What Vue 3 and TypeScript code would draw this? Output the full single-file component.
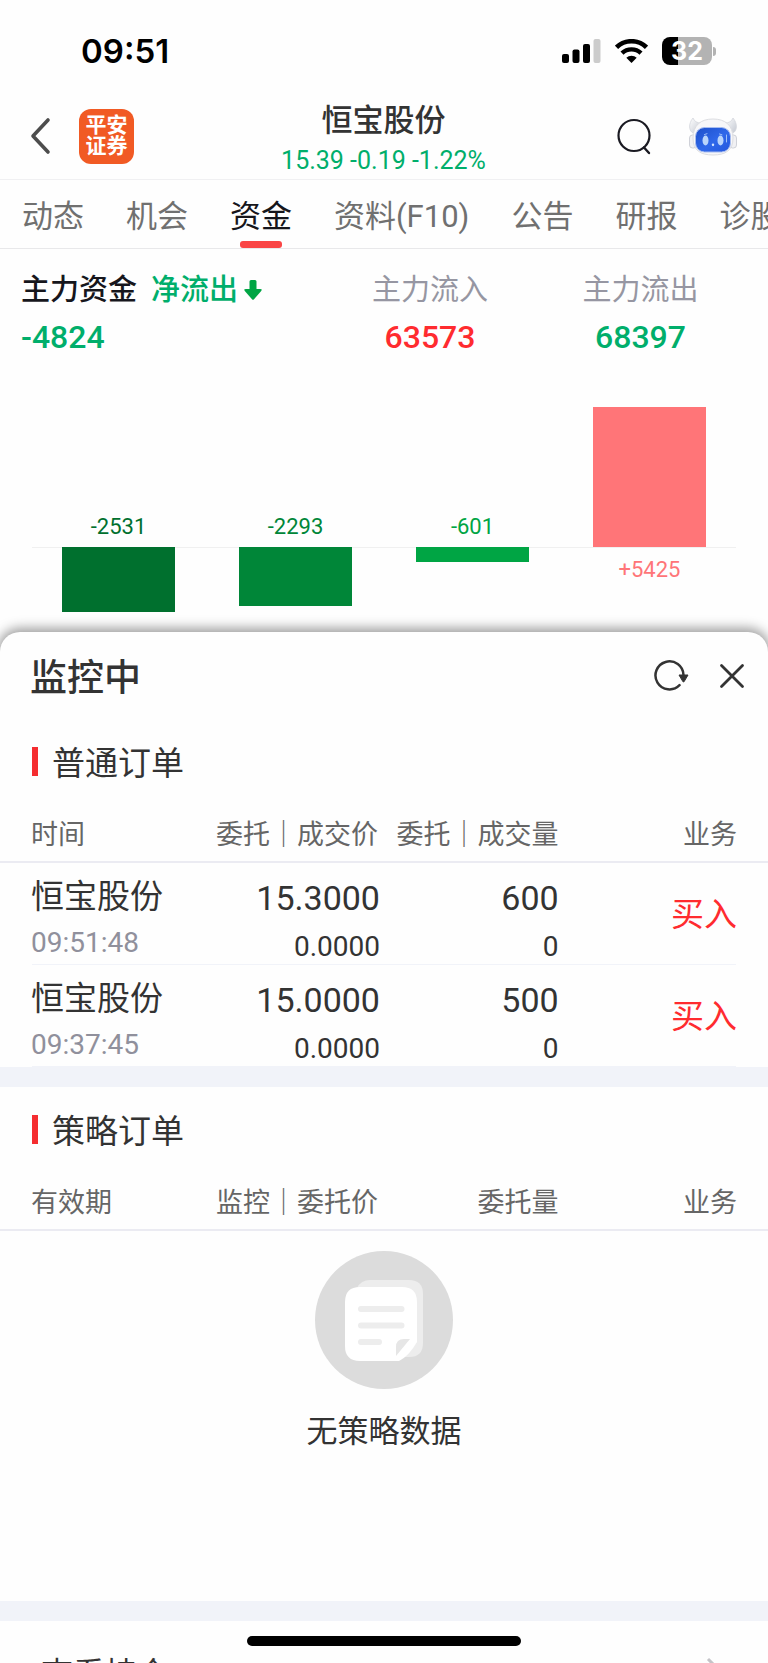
<script setup lang="ts">
interface FlowBar {
  value: number
  color: string
}
interface Order {
  name: string
  time: string
  price: string
  dealPrice: string
  volume: string
  dealVolume: string
  side: string
}

const tabs: string[] = ['动态', '机会', '资金', '资料(F10)', '公告', '研报', '诊股']
const activeTab = '资金'

const bars: FlowBar[] = [
  { value: -2531, color: '#00702e' },
  { value: -2293, color: '#008638' },
  { value: -601, color: '#00a544' },
  { value: 5425, color: '#ff7578' },
]
const peak = 5425
const barHeight = (v: number): string => `${Math.floor((Math.abs(v) / peak) * 140)}px`
const signed = (v: number): string => (v > 0 ? `+${v}` : `${v}`)

const orders: Order[] = [
  { name: '恒宝股份', time: '09:51:48', price: '15.3000', dealPrice: '0.0000', volume: '600', dealVolume: '0', side: '买入' },
  { name: '恒宝股份', time: '09:37:45', price: '15.0000', dealPrice: '0.0000', volume: '500', dealVolume: '0', side: '买入' },
]
</script>

<template>
  <div class="screen">
    <div class="status">
      <span class="clock">09:51</span>
      <div class="status-icons">
        <svg class="signal" width="39" height="24" viewBox="0 0 39 24" aria-hidden="true">
          <rect x="0" y="15" width="7" height="9" rx="2" />
          <rect x="10.5" y="10.5" width="7" height="13.5" rx="2" />
          <rect x="21" y="5" width="7" height="19" rx="2" />
          <rect x="31.500" y="0" width="7" height="24" rx="2" fill="#cccccc" />
        </svg>
        <svg class="wifi" width="33" height="24" viewBox="0 0 33 24" aria-hidden="true">
          <path d="M1.500 8.300a21.500 21.500 0 0 1 30 0" fill="none" stroke="#000" stroke-width="4.600" />
          <path d="M7 14.200a13.700 13.700 0 0 1 19 0" fill="none" stroke="#000" stroke-width="4.400" />
          <path d="M11.300 18.700a7.600 7.600 0 0 1 10.400 0L16.500 24z" />
        </svg>
        <div class="battery"><span class="battery-body">32</span><i class="battery-tip"></i></div>
      </div>
    </div>

    <header class="header">
      <div class="header-left">
        <button class="icon-btn" aria-label="返回">
          <svg width="22" height="38" viewBox="0 0 22 38"><path d="M19 3 4 19 19 35" fill="none" stroke="#4d4d4d" stroke-width="3.600" stroke-linecap="round" stroke-linejoin="round" /></svg>
        </button>
        <div class="logo"><span>平安</span><span>证券</span></div>
      </div>
      <div class="stock">
        <h1>恒宝股份</h1>
        <p>15.39 -0.19 -1.22%</p>
      </div>
      <div class="header-right">
        <button class="icon-btn" aria-label="搜索">
          <svg width="36" height="38" viewBox="0 0 36 38"><circle cx="18" cy="18.500" r="15.500" fill="none" stroke="#1a1a22" stroke-width="2.200" /><path d="M28 30.500l5 5.500" stroke="#1a1a22" stroke-width="2.400" stroke-linecap="round" /></svg>
        </button>
        <button class="icon-btn" aria-label="智能助手">
          <svg width="50" height="40" viewBox="0 0 50 40">
            <defs>
              <linearGradient id="visor" x1="0" y1="0" x2="1" y2="1"><stop offset="0" stop-color="#1d4fc9" /><stop offset=".55" stop-color="#2f68ea" /><stop offset="1" stop-color="#2457dd" /></linearGradient>
              <linearGradient id="horn" x1="0" y1="0" x2="1" y2="1"><stop offset="0" stop-color="#ffffff" /><stop offset="1" stop-color="#c3c8d2" /></linearGradient>
            </defs>
            <path d="M5 2C0 8 1 15 5 17L13 7Q7 7 5 2z" fill="url(#horn)" stroke="#d3d6dc" stroke-width=".8" />
            <path d="M45 2C50 8 49 15 45 17L37 7Q43 7 45 2z" fill="url(#horn)" stroke="#d3d6dc" stroke-width=".8" />
            <rect x="1.500" y="19" width="7" height="13" rx="3" fill="#f1f1f4" stroke="#cfd1d8" />
            <rect x="41.500" y="19" width="7" height="13" rx="3" fill="#f1f1f4" stroke="#cfd1d8" />
            <path d="M25 3C37 3 45 9 45 22C45 34 38 39 25 39S5 34 5 22C5 9 13 3 25 3z" fill="#f7f7f9" stroke="#dcdde1" />
            <rect x="7.500" y="11.500" width="35" height="24.500" rx="9" fill="url(#visor)" stroke="#a8bdf0" />
            <ellipse cx="17.500" cy="24.500" rx="3" ry="5" fill="#b9d4fb" />
            <ellipse cx="32.500" cy="24.500" rx="3" ry="5" fill="#b9d4fb" />
            <path d="M16.500 18.500l2.500-.8M31.500 18l2.500.8M38.500 19v7" stroke="#9fc0f8" stroke-linecap="round" />
            <ellipse cx="25" cy="28.800" rx="1.200" ry="1.400" fill="#d3e4ff" />
          </svg>
        </button>
      </div>
    </header>

    <nav class="tabs">
      <button v-for="t in tabs" :key="t" class="tab" :class="{ active: t === activeTab }">{{ t }}</button>
    </nav>

    <section class="summary">
      <div class="main-flow">
        <p class="label dark">主力资金 <span class="trend">净流出</span>
          <svg width="18" height="20" viewBox="0 0 18 20" aria-hidden="true"><path d="M7 0h4q1.500 0 1.500 1.500V9H16q3 0 1 2.200l-7 8q-1 1-2 0l-7-8Q-1 9 2 9h3.500V1.500Q5.500 0 7 0z" fill="#00a544" /></svg>
        </p>
        <p class="amount green">-4824</p>
      </div>
      <div class="flow">
        <p class="label">主力流入</p>
        <p class="amount red">63573</p>
      </div>
      <div class="flow">
        <p class="label">主力流出</p>
        <p class="amount green">68397</p>
      </div>
    </section>

    <section class="chart">
      <div v-for="b in bars" :key="b.value" class="chart-col">
        <div class="upper">
          <span v-if="b.value < 0" class="bar-label" :style="{ color: b.color }">{{ signed(b.value) }}</span>
          <div v-else class="bar" :style="{ height: barHeight(b.value), background: b.color }"></div>
        </div>
        <div class="lower">
          <div v-if="b.value < 0" class="bar" :style="{ height: barHeight(b.value), background: b.color }"></div>
          <span v-else class="bar-label" :style="{ color: b.color }">{{ signed(b.value) }}</span>
        </div>
      </div>
    </section>

    <main class="sheet">
      <div class="sheet-head">
        <h2>监控中</h2>
        <div class="sheet-actions">
          <button class="icon-btn" aria-label="刷新">
            <svg width="36" height="34" viewBox="0 0 36 34"><path d="M26.500 26.200A14 14 0 1 1 30.500 16" fill="none" stroke="#333" stroke-width="2.500" stroke-linecap="round" /><path d="M26 16h9l-4 6.800h-1z" fill="#333" stroke="#333" stroke-linejoin="round" /></svg>
          </button>
          <button class="icon-btn" aria-label="关闭">
            <svg width="26" height="26" viewBox="0 0 26 26"><path d="M2.500 2.500l21 21M23.500 2.500l-21 21" stroke="#333" stroke-width="2.800" stroke-linecap="round" /></svg>
          </button>
        </div>
      </div>

      <section>
        <h3 class="section-title">普通订单</h3>
        <table>
          <colgroup><col class="c1" /><col class="c2" /><col class="c3" /><col /></colgroup>
          <thead>
            <tr><th>时间</th><th>委托｜成交价</th><th>委托｜成交量</th><th>业务</th></tr>
          </thead>
          <tbody>
            <tr v-for="o in orders" :key="o.time">
              <td class="who"><div class="name">{{ o.name }}</div><div class="time">{{ o.time }}</div></td>
              <td class="figures"><div class="num">{{ o.price }}</div><div class="sub">{{ o.dealPrice }}</div></td>
              <td class="figures"><div class="num">{{ o.volume }}</div><div class="sub">{{ o.dealVolume }}</div></td>
              <td class="side">{{ o.side }}</td>
            </tr>
          </tbody>
        </table>
      </section>

      <section class="banded">
        <h3 class="section-title">策略订单</h3>
        <table>
          <colgroup><col class="c1" /><col class="c2" /><col class="c3" /><col /></colgroup>
          <thead>
            <tr><th>有效期</th><th>监控｜委托价</th><th>委托量</th><th>业务</th></tr>
          </thead>
        </table>
        <div class="empty">
          <svg width="138" height="138" viewBox="0 0 138 138" aria-hidden="true">
            <circle cx="69" cy="69" r="69" fill="#dcdcdc" />
            <path d="M42 37Q46 29 55 29H94Q108 29 108 43V92Q108 106 94 106H80z" fill="#ededed" />
            <path d="M45 36H87Q102 36 102 51V91Q94 105 84 110H45Q30 110 30 95V51Q30 36 45 36z" fill="#fff" />
            <path d="M81 105V96Q81 88 89 88H95z" fill="#e6e6e6" />
            <path d="M46 58H86.500M46 74.500H86.500M46 91H64" stroke="#ededed" stroke-width="6" stroke-linecap="round" />
          </svg>
          <p>无策略数据</p>
        </div>
      </section>

      <a class="holdings banded" href="#holdings">
        <span>查看持仓</span>
        <svg width="16" height="28" viewBox="0 0 16 28" aria-hidden="true"><path d="M2 2l12 12L2 26" fill="none" stroke="#c4c4c8" stroke-width="3" /></svg>
      </a>
    </main>

    <div class="home-bar"></div>
  </div>
</template>

<style>
body {
  margin: 0;
  background: #fff;
}
</style>

<style scoped>
.screen {
  position: relative;
  height: 100vh;
  overflow: hidden;
  display: flex;
  flex-direction: column;
  background: #fefefe;
  color: #333;
  font-family: Roboto, "Noto Sans CJK SC", sans-serif;
}
.screen > * {
  flex: none;
}
h1, h2, h3, p {
  margin: 0;
  font-weight: 400;
}
button {
  border: 0;
  padding: 0;
  background: none;
  font: inherit;
  color: inherit;
}
svg {
  display: block;
}
.status {
  display: flex;
  justify-content: space-between;
  align-items: center;
  height: 92px;
  box-sizing: border-box;
  padding: 10px 52px 0 81px;
}
.clock {
  font: 600 33px/40px Inter, sans-serif;
  color: #000;
}
.status-icons {
  display: flex;
  align-items: center;
  gap: 14px;
}
.battery {
  display: flex;
  align-items: center;
  gap: 1px;
}
.battery-body {
  width: 50px;
  height: 28px;
  border-radius: 8px;
  background: linear-gradient(90deg, #000 32%, #b3b3b3 32%);
  color: #fff;
  font: 700 25px/28px Inter, sans-serif;
  text-align: center;
}
.battery-tip {
  width: 3px;
  height: 9px;
  border-radius: 0 4px 4px 0;
  background: #b3b3b3;
}
.header {
  display: grid;
  grid-template-columns: 1fr auto 1fr;
  align-items: center;
  height: 88px;
  box-sizing: border-box;
  padding: 0 30px 0 29px;
  border-bottom: 1px solid #f0f0f2;
}
.header-left {
  display: flex;
  align-items: center;
  gap: 28px;
}
.header-right {
  display: flex;
  align-items: center;
  justify-content: flex-end;
  gap: 36px;
}
.logo {
  width: 55px;
  height: 55px;
  border-radius: 12px;
  background: #f15a24;
  color: #fff;
  font-size: 21px;
  font-weight: 700;
  line-height: 21px;
  display: flex;
  flex-direction: column;
  align-items: center;
  justify-content: center;
}
.stock {
  padding-top: 8px;
  text-align: center;
}
.stock h1 {
  font-size: 31px;
  line-height: 42px;
  font-weight: 500;
}
.stock p {
  font-size: 25px;
  line-height: 38px;
  color: #00ae6b;
}
.tabs {
  display: flex;
  gap: 42px;
  height: 69px;
  box-sizing: border-box;
  padding-left: 22px;
  border-bottom: 1px solid #e8e8ea;
  overflow: hidden;
}
.tab {
  flex: none;
  display: flex;
  flex-direction: column;
  align-items: center;
  padding-top: 13px;
  font-size: 31px;
  line-height: 48px;
  color: #707070;
}
.tab.active {
  color: #16161c;
}
.tab.active::after {
  content: "";
  width: 42px;
  height: 7px;
  border-radius: 3px;
  background: #fa4545;
}
.summary {
  display: grid;
  grid-template-columns: 305fr 208fr 213fr;
  padding: 17px 21px 0;
}
.label {
  font-size: 29px;
  line-height: 48px;
  color: #9696a2;
}
.label.dark {
  display: flex;
  align-items: center;
  color: #16161c;
  font-weight: 500;
}
.trend {
  margin: 0 6px 0 14px;
  color: #00ae6b;
}
.amount {
  font-size: 32px;
  line-height: 46px;
  font-weight: 500;
}
.flow {
  text-align: center;
}
.green {
  color: #00ae6b;
}
.red {
  color: #ff2b2f;
}
.chart {
  display: grid;
  grid-template-columns: repeat(4, 1fr);
  padding: 47px 30px 0;
  background: linear-gradient(#f0f0f0, #f0f0f0) center 187px / calc(100% - 64px) 1px no-repeat;
}
.chart-col {
  display: flex;
  flex-direction: column;
}
.upper {
  height: 140px;
  display: flex;
  flex-direction: column;
  justify-content: flex-end;
  align-items: center;
}
.lower {
  height: 85px;
  display: flex;
  flex-direction: column;
  align-items: center;
}
.bar {
  width: 64%;
}
.bar-label {
  margin: 9px 0 6px;
  font-size: 22px;
  line-height: 28px;
}
.sheet {
  border-radius: 20px 20px 0 0;
  background: #fefefe;
  box-shadow: 0 -2px 12px 2px rgba(0, 0, 0, 0.38);
}
.sheet-head {
  display: flex;
  justify-content: space-between;
  align-items: center;
  height: 87px;
  box-sizing: border-box;
  padding: 0 23px 0 30px;
}
.sheet-head h2 {
  padding-top: 6px;
  font-size: 37px;
  line-height: 48px;
  font-weight: 500;
}
.sheet-actions {
  display: flex;
  align-items: center;
  gap: 30px;
}
.section-title {
  display: flex;
  align-items: center;
  gap: 14px;
  height: 84px;
  margin-bottom: 2px;
  padding-left: 32px;
  font-size: 33px;
}
.section-title::before {
  content: "";
  width: 6px;
  height: 29px;
  background: #f52d30;
}
.banded {
  border-top: 20px solid #f1f3f9;
}
table {
  width: 100%;
  table-layout: fixed;
  border-collapse: separate;
  border-spacing: 0;
}
.c1 {
  width: 26%;
}
.c2 {
  width: 24%;
}
.c3 {
  width: 23%;
}
th,
td {
  padding: 0 4px 0 0;
  text-align: right;
  font-weight: 400;
}
th {
  height: 52px;
  padding-top: 4px;
  border-bottom: 2px solid #ebebf2;
  font-size: 27px;
  line-height: 40px;
  color: #666;
  white-space: nowrap;
}
th:nth-child(2) {
  padding-right: 6px;
}
th:nth-child(3),
td:nth-child(3) {
  padding-right: 2px;
}
th:first-child,
td:first-child {
  padding-left: 31px;
  text-align: left;
}
th:last-child,
td:last-child {
  padding-right: 31px;
}
tbody tr {
  height: 102px;
  background: linear-gradient(#f1f3f9, #f1f3f9) center bottom / calc(100% - 64px) 1px no-repeat;
}
.who,
.figures {
  vertical-align: top;
}
.who {
  padding-top: 10px;
}
.figures {
  padding-top: 4px;
}
.name {
  font-size: 33px;
  line-height: 48px;
}
.time {
  font-size: 28px;
  line-height: 44px;
  color: #90909c;
}
.num {
  font-size: 34px;
  line-height: 62px;
}
.sub {
  font-size: 28px;
  line-height: 36px;
}
.side {
  padding-bottom: 4px;
  font-size: 33px;
  color: #ff2b2f;
}
.empty {
  display: flex;
  flex-direction: column;
  align-items: center;
  gap: 19px;
  min-height: 350px;
  padding-top: 20px;
}
.empty p {
  font-size: 31px;
  line-height: 48px;
}
.holdings {
  display: flex;
  justify-content: space-between;
  align-items: center;
  height: 100px;
  padding: 0 46px 0 41px;
  font-size: 32px;
  color: #333;
  text-decoration: none;
}
.home-bar {
  position: absolute;
  left: 50%;
  bottom: 17px;
  width: 274px;
  height: 10px;
  transform: translateX(-50%);
  border-radius: 5px;
  background: #000;
}
</style>
